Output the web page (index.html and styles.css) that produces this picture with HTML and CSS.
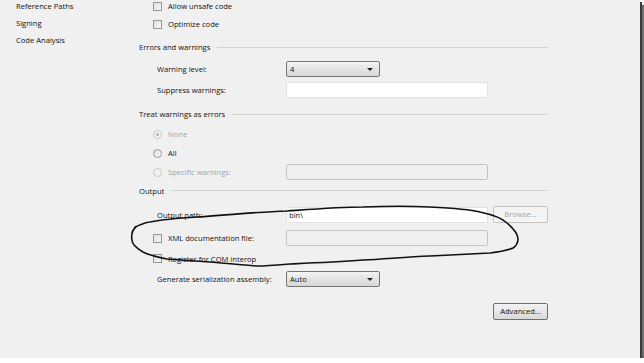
FILE: index.html
```html
<!DOCTYPE html>
<html lang="en">
<head>
    <meta charset="UTF-8">
    <title>Project Properties - Build</title>
    <link rel="stylesheet" href="styles.css">
</head>
<body>

<div class="window">
    <ul class="nav">
        <li>Reference Paths</li>
        <li>Signing</li>
        <li>Code Analysis</li>
    </ul>

    <div class="page">
        <div class="group general">
            <div class="row"><span class="check"><span class="box"></span>Allow unsafe code</span></div>
            <div class="row"><span class="check"><span class="box"></span>Optimize code</span></div>
        </div>

        <div class="section">Errors and warnings</div>
        <div class="group errors">
            <div class="row">
                <span class="label">Warning level:</span>
                <div class="select">4<span class="arrow"></span></div>
            </div>
            <div class="row">
                <span class="label">Suppress warnings:</span>
                <div class="input"></div>
            </div>
        </div>

        <div class="section treat">Treat warnings as errors</div>
        <div class="group options">
            <div class="row"><span class="check disabled"><span class="radio on"></span>None</span></div>
            <div class="row"><span class="check"><span class="radio"></span>All</span></div>
            <div class="row">
                <span class="check disabled"><span class="radio"></span>Specific warnings:</span>
                <div class="input off"></div>
            </div>
        </div>

        <div class="section out">Output</div>
        <div class="group output">
            <div class="row first">
                <span class="label">Output path:</span>
                <div class="input">bin\</div>
                <div class="button off">Browse...</div>
            </div>
            <div class="row">
                <span class="check"><span class="box"></span>XML documentation file:</span>
                <div class="input off"></div>
            </div>
            <div class="row"><span class="check"><span class="box"></span>Register for COM interop</span></div>
            <div class="row">
                <span class="label">Generate serialization assembly:</span>
                <div class="select">Auto<span class="arrow"></span></div>
            </div>
        </div>

        <div class="actions">
            <div class="button">Advanced...</div>
        </div>
    </div>

    <!-- hand drawn ring round the xml option -->
    <svg class="ink" width="640" height="358" viewBox="0 0 640 358">
        <path d="M135 227 C142 224 146 222 150 222 C165 219 180 218 197 217 C230 215 255 212 287 211 C315 209 340 207 363 207 C390 206 410 206 430 207 C450 208 468 209 480 212 C494 215 502 218 507 223 C514 229 518 234 518 239 C518 243 516 246 513 248 C506 251 498 252 490 253 C470 254 450 255 430 256 C405 257 385 259 363 260 C335 262 312 263 290 264 C278 265 267 266 257 266 C240 265 225 263 210 262 C195 261 180 260 167 259 C157 257 149 255 143 252 C136 248 132 244 132 240 C131 234 132 230 136 227"
              fill="none" stroke="#111" stroke-width="1.6" stroke-linecap="round"/>
    </svg>
</div>

</body>
</html>
```

FILE: styles.css
```css
body {
    margin: 0;
    background: #fff;
    font-family: "Open Sans", "Noto Sans", sans-serif;
    font-size: 7.6px;
    color: #111;
}
.window {
    position: relative;
    display: flex;
    width: 640px;
    height: 358px;
    background: #f0f0f0;
    overflow: hidden;
    box-shadow: 2px 2px 0 #3a3a3a, 4px 5px 1px #6e6e6e;
}
.nav {
    list-style: none;
    width: 123px;
    margin: -2px 0 0;
    padding: 0 0 0 16px;
}
.nav li {
    height: 17px;
    line-height: 17px;
}
.page {
    width: 409px;
    margin-top: -3px;
}
.group {
    display: flex;
    flex-direction: column;
}
.row {
    display: grid;
    grid-template-columns: 147px 202px 60px;
    align-items: center;
    height: 18px;
}
.label {
    padding-left: 18px;
}
.check {
    display: flex;
    align-items: center;
    padding-left: 14px;
}
.check.disabled {
    color: #a3a3a3;
}
.box, .radio {
    width: 7px;
    height: 7px;
    margin-right: 6px;
    border: 1px solid #979797;
    background: linear-gradient(135deg, #dedede, #f7f7f7);
}
.radio {
    border-radius: 50%;
    position: relative;
}
.check.disabled .radio {
    border-color: #c9c9c9;
    background: #f1f1f1;
}
.radio.on::after {
    content: "";
    position: absolute;
    left: 2px;
    top: 2px;
    width: 3px;
    height: 3px;
    border-radius: 50%;
    background: #b4b4b4;
}
.section {
    display: flex;
    align-items: center;
    height: 18px;
    margin-top: 5px;
}
.section::after {
    content: "";
    flex: 1;
    margin-left: 7px;
    border-top: 1px solid #d3d3d3;
}
.section.treat {
    margin-top: 7px;
}
.section.out {
    margin-top: 0;
}
.errors {
    margin-top: 4px;
    gap: 4px;
}
.errors .row {
    height: 17px;
}
.options {
    margin-top: 1.5px;
}
.options .row {
    height: 19px;
}
.output {
    margin-top: 5px;
}
.output .row {
    height: 20.5px;
}
.output .row.first {
    margin-bottom: 3px;
}
.select {
    position: relative;
    width: 89px;
    height: 14px;
    line-height: 14px;
    padding-left: 3px;
    border: 1px solid #767676;
    border-radius: 2px;
    background: linear-gradient(#f4f4f4, #e4e4e4 50%, #d8d8d8);
}
.arrow {
    position: absolute;
    right: 6px;
    top: 6px;
    border-left: 3px solid transparent;
    border-right: 3px solid transparent;
    border-top: 3px solid #222;
}
.input {
    height: 14px;
    line-height: 14px;
    padding-left: 2px;
    border: 1px solid #e2e2e2;
    background: #fff;
}
.input.off {
    border-color: #c6c6c6;
    border-radius: 2px;
    background: #f0f0f0;
}
.button {
    justify-self: end;
    width: 53px;
    height: 15px;
    line-height: 15px;
    text-align: center;
    border: 1px solid #707070;
    border-radius: 2px;
    background: linear-gradient(#f3f3f3, #e6e6e6 50%, #d9d9d9);
}
.button.off {
    color: #a3a3a3;
    border-color: #c3c3c3;
    background: #f4f4f4;
}
.actions {
    display: flex;
    justify-content: flex-end;
    margin-top: 13px;
}
.ink {
    position: absolute;
    left: 0;
    top: 0;
    pointer-events: none;
}
```
